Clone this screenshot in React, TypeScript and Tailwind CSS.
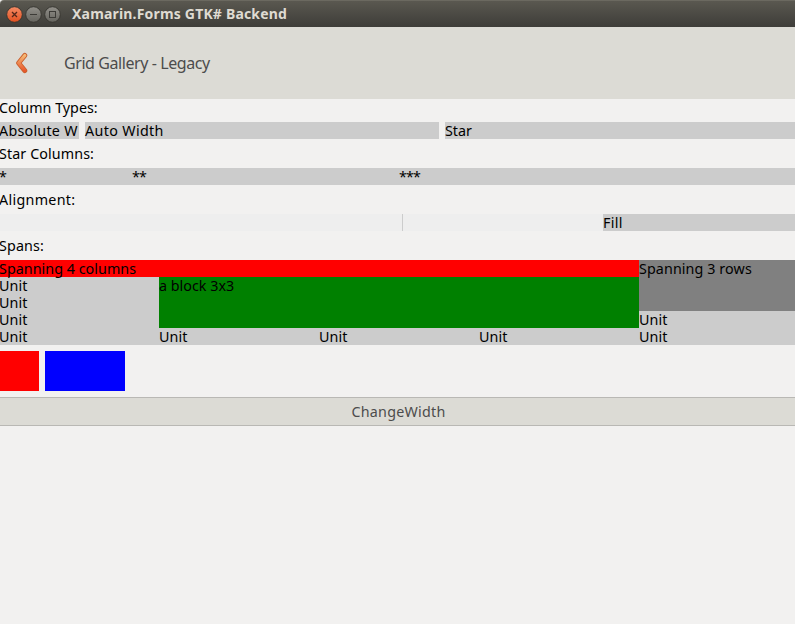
import React from "react";

type LabelProps = { text: string; className?: string };

function Label({ text, className = "" }: LabelProps) {
  return <div className={`whitespace-nowrap ${className}`}>{text}</div>;
}

function WindowButton({ kind }: { kind: "close" | "min" | "max" }) {
  const close = kind === "close";
  const stroke = close ? "#53271a" : "#3c3b37";
  return (
    <svg width="17" height="17" viewBox="0 0 17 17">
      <defs>
        <linearGradient id={`fill-${kind}`} x1="0" y1="0" x2="0" y2="1">
          <stop offset="0" stopColor={close ? "#f58c66" : "#92908a"} />
          <stop offset="1" stopColor={close ? "#e2501f" : "#65645e"} />
        </linearGradient>
      </defs>
      <circle cx="8.5" cy="8.5" r="7.8" fill={`url(#fill-${kind})`} stroke="#35342f" strokeWidth="0.9" />
      {kind === "close" && <path d="M6 6l5 5M11 6l-5 5" stroke={stroke} strokeWidth="1.3" />}
      {kind === "min" && <path d="M5 8.5h7" stroke={stroke} />}
      {kind === "max" && <rect x="5.5" y="5.5" width="6" height="6" fill="none" stroke={stroke} />}
    </svg>
  );
}

export default function App() {
  return (
    <div className="flex h-[624px] w-[795px] flex-col overflow-hidden bg-[#f2f1f0] font-['Noto_Sans',sans-serif] text-[14.3px] leading-[17px] text-black">
      <header className="flex h-[27px] shrink-0 items-center rounded-tl-[4px] border-t border-[#6b6960] bg-linear-to-b from-[#5a5850] to-[#3e3d39] pl-[6px]">
        <div className="flex gap-[2px]">
          <WindowButton kind="close" />
          <WindowButton kind="min" />
          <WindowButton kind="max" />
        </div>
        <h1 className="ml-[11px] pb-[2px] text-[14px] font-bold tracking-[0.18px] text-[#dfdbd2]">Xamarin.Forms GTK# Backend</h1>
      </header>
      <nav className="flex h-[72px] shrink-0 items-center bg-[#dcdbd5] pl-[15px]">
        <svg width="14" height="22" viewBox="0 0 14 22">
          <defs>
            <linearGradient id="arrow" x1="0" y1="0" x2="0" y2="1">
              <stop offset="0" stopColor="#f4b875" />
              <stop offset="1" stopColor="#e9582c" />
            </linearGradient>
          </defs>
          <path d="M9.8 3.4L3.6 11L9.8 18.6" fill="none" stroke="#cb5f2c" strokeWidth="4.9" strokeLinecap="round" strokeLinejoin="round" />
          <path d="M9.8 3.4L3.6 11L9.8 18.6" fill="none" stroke="url(#arrow)" strokeWidth="3.1" strokeLinecap="round" strokeLinejoin="round" />
        </svg>
        <span className="ml-[35px] text-[16px] tracking-[-0.42px] text-[#4c4c4c]">Grid Gallery - Legacy</span>
      </nav>
      <main className="flex flex-col gap-[6px]">
        <Label text="Column Types:" className="-indent-px" />
        <div className="grid h-[17px] grid-cols-[79px_354px_350px] gap-[6px]">
          <Label text="Absolute W" className="overflow-hidden bg-[#ccc] -indent-px tracking-[0.25px]" />
          <Label text="Auto Width" className="bg-[#ccc] tracking-[0.35px]" />
          <Label text="Star" className="bg-[#ccc]" />
        </div>
        <Label text="Star Columns:" className="-indent-px tracking-[0.1px]" />
        <div className="grid h-[17px] grid-cols-[133px_267px_395px] bg-[#ccc] tracking-[-0.9px]">
          <Label text="*" className="-indent-px" />
          <Label text="**" className="-indent-px" />
          <Label text="***" className="-indent-px" />
        </div>
        <Label text="Alignment:" className="-indent-px tracking-[0.3px]" />
        <div className="grid h-[17px] grid-cols-[402px_1px_200px_192px]">
          <div className="bg-[#eee]" />
          <div className="bg-[#ccc]" />
          <div className="bg-[#eee]" />
          <Label text="Fill" className="bg-[#ccc] tracking-[0.3px]" />
        </div>
        <Label text="Spans:" className="-indent-px tracking-[0.15px]" />
        <div className="grid grid-cols-[159px_160px_160px_160px_156px] grid-rows-[repeat(5,17px)] bg-[#ccc] tracking-[0.1px]">
          <Label text="Spanning 4 columns" className="col-span-4 bg-[#f00] -indent-px tracking-[0.04px]" />
          <Label text="Spanning 3 rows" className="row-span-3 bg-[#808080]" />
          <Label text="Unit" className="-indent-px" />
          <Label text="a block 3x3" className="col-span-3 row-span-3 bg-[#008000] tracking-[0.02px]" />
          <Label text="Unit" className="col-start-1 -indent-px" />
          <Label text="Unit" className="col-start-1 -indent-px" />
          <Label text="Unit" className="col-start-5" />
          <Label text="Unit" className="-indent-px" />
          <Label text="Unit" />
          <Label text="Unit" />
          <Label text="Unit" />
          <Label text="Unit" />
        </div>
        <div className="flex h-10 gap-[6px]">
          <div className="w-[39px] bg-[#f00]" />
          <div className="w-20 bg-[#00f]" />
        </div>
        <button className="h-[29px] border-y border-[#b9b8b4] bg-[#dcdbd5] pl-[2px] tracking-[0.25px] text-[#4c4c4c]">ChangeWidth</button>
      </main>
    </div>
  );
}
